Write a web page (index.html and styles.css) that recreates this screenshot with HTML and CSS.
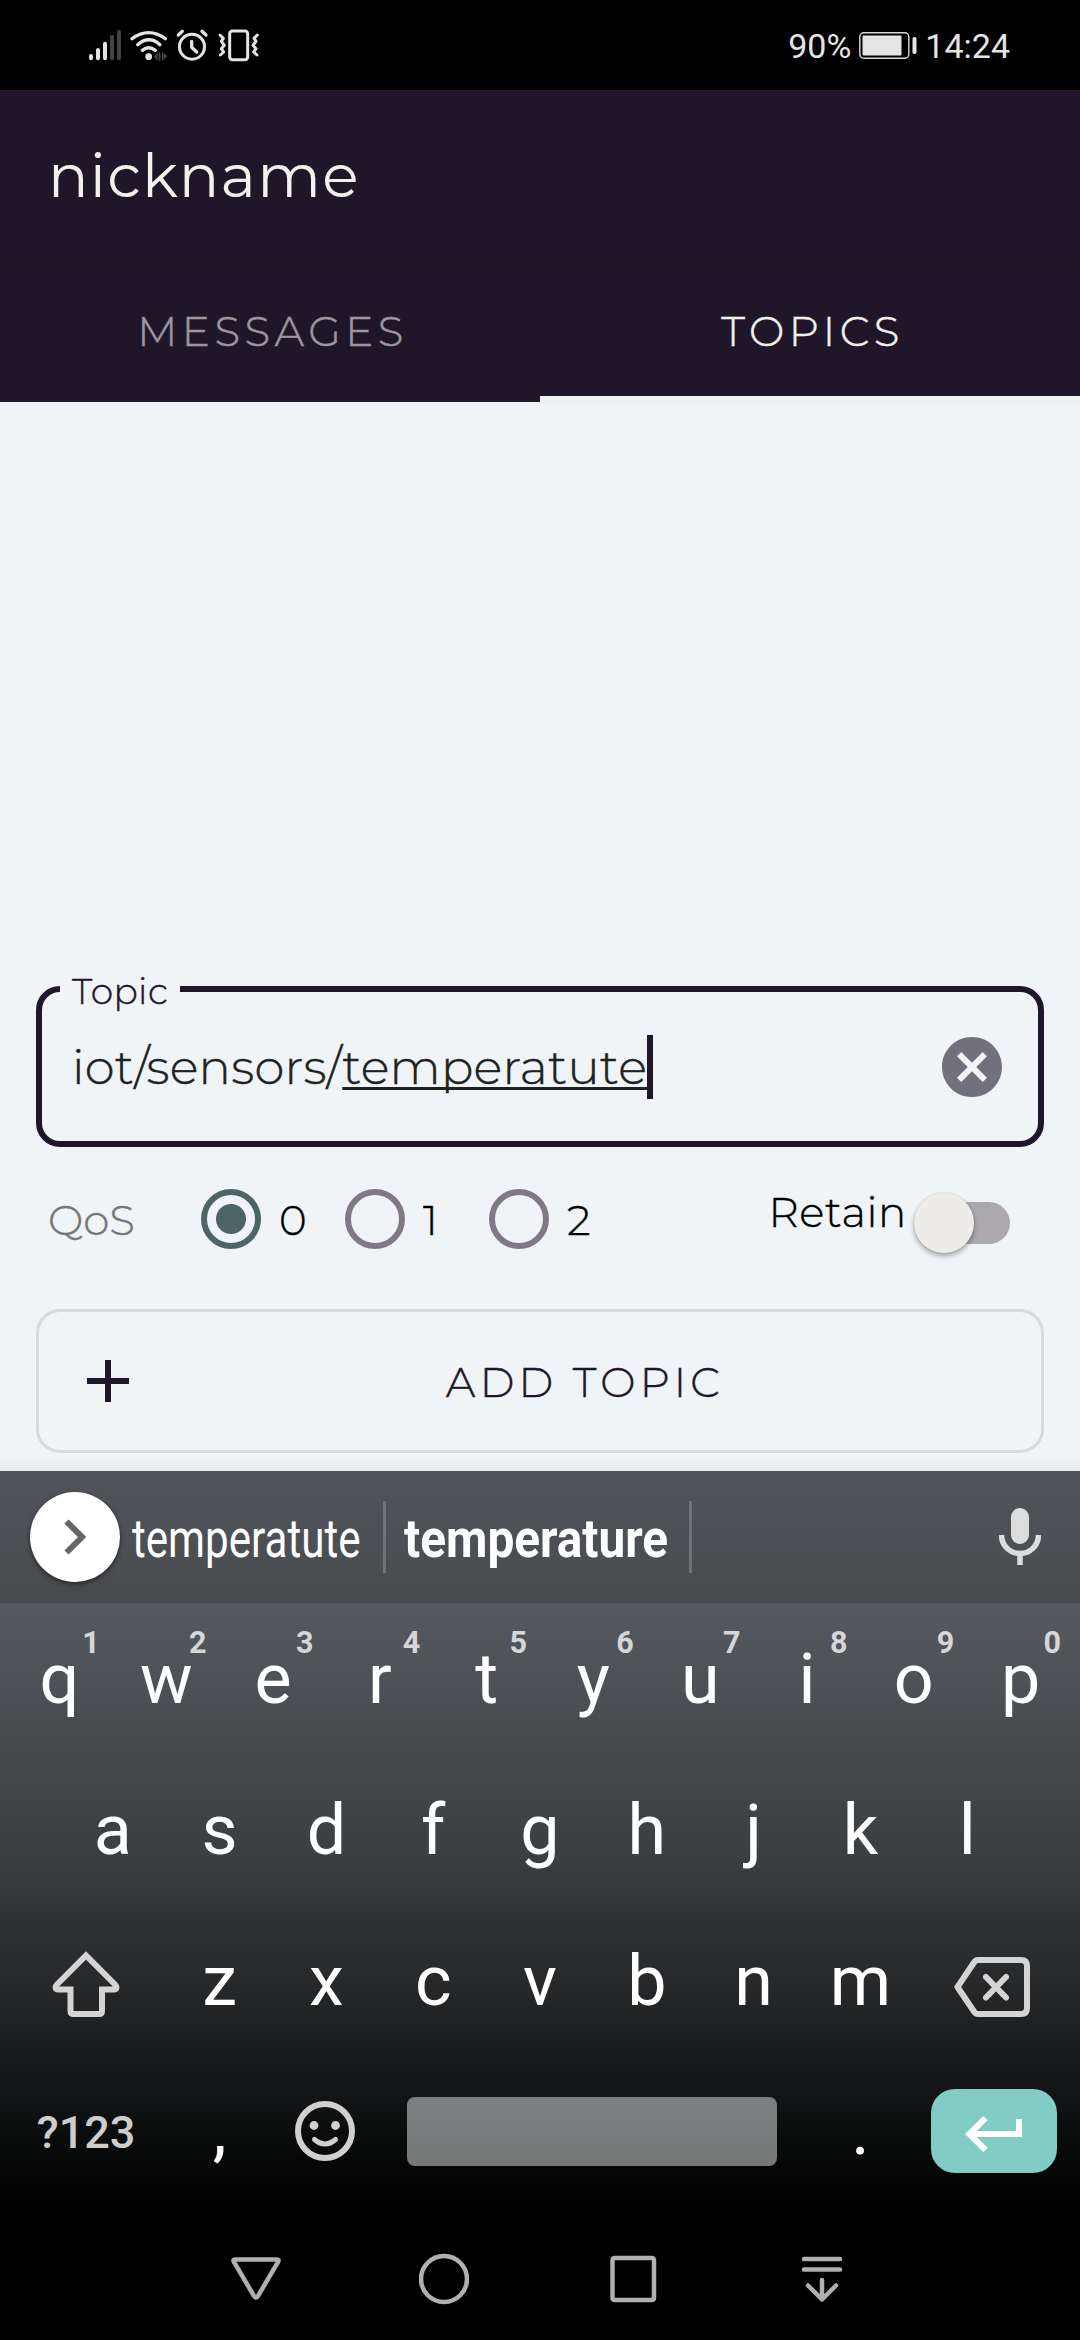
FILE: index.html
```html
<!DOCTYPE html>
<html lang="en">
<head>
<meta charset="utf-8">
<title>nickname</title>
<link rel="stylesheet" href="styles.css">
</head>
<body>
<div class="screen">
  <div class="status-bar">
    <svg class="status-icons" width="190" height="50" viewBox="0 0 570 150" fill="none" stroke="#e4e4e4" stroke-width="10" stroke-linecap="round" stroke-linejoin="round">
      <g stroke-width="12"><path d="M33 108v7M54 90v25M75 71v44"/><path stroke="#444" d="M96 51v64M117 36v79"/></g>
      <path d="M156 56Q206 20 256 56M173 74Q207 45 240 74M187 91Q206 76 226 91"/>
      <circle cx="206" cy="110" r="10" fill="#e4e4e4" stroke="none"/>
      <path fill="#444" stroke="none" d="M222 109l11-11v24zM236 98h5v24h-5zM246 98h4v24h-4zM251 99l11 9-11 12z"/>
      <circle cx="336" cy="80" r="37.5" stroke-width="9"/>
      <path d="M335 64v18l15 14M295 45l12-11M366 34l12 11"/>
      <rect x="449" y="33" width="54" height="86" rx="8" stroke-width="9"/>
      <path stroke-width="9" d="M420 45l10 10-6 9 9 12-9 10 7 10-10 9M532 45l-10 10 6 9-9 12 9 10-7 10 10 9"/>
    </svg>
    <span class="status-battery">90%</span>
    <svg class="battery" width="60" height="30" viewBox="0 0 60 30">
      <rect x="1.8" y="2.8" width="49" height="25.5" rx="4" fill="none" stroke="#d8d8d8" stroke-width="1.4"/>
      <rect x="4.5" y="5.5" width="39" height="20" rx="1" fill="#e4e4e4"/>
      <rect x="54.5" y="7" width="4" height="17" rx="1.8" fill="#e4e4e4"/>
    </svg>
    <span class="status-time">14:24</span>
  </div>

  <header class="app-bar">nickname</header>
  <nav class="tabs">
    <div class="tab">MESSAGES</div>
    <div class="tab tab-active">TOPICS</div>
  </nav>

  <main class="content">
    <div class="field">
      <span class="field-label">Topic</span>
      <span class="field-text">iot/sensors/</span><span class="field-text composing">temperatute</span><span class="caret"></span>
      <svg class="clear" width="72" height="72" viewBox="0 0 24 24" fill="#73707d"><path d="M12 2C6.47 2 2 6.47 2 12s4.47 10 10 10 10-4.47 10-10S17.53 2 12 2zm5 13.59L15.59 17 12 13.41 8.41 17 7 15.59 10.59 12 7 8.41 8.41 7 12 10.59 15.59 7 17 8.41 13.41 12 17 15.59z"/></svg>
    </div>
    <div class="options">
      <span class="qos">QoS</span>
      <div class="radio-option"><span class="radio radio-on"></span>0</div>
      <div class="radio-option"><span class="radio"></span>1</div>
      <div class="radio-option"><span class="radio"></span>2</div>
      <span class="retain">Retain</span>
      <span class="switch"><span class="track"></span><span class="thumb"></span></span>
    </div>
    <div class="add-button">
      <svg width="42" height="42" viewBox="0 0 42 42"><path d="M18 0h6v18h18v6H24v18h-6V24H0v-6h18z" fill="#1f162a"/></svg>
      <span class="add-text">ADD TOPIC</span>
    </div>
  </main>

  <section class="suggestions">
    <span class="expand"><svg width="22" height="36" viewBox="0 0 22 36"><path d="M2.500 2.500L18 18 2.500 33.500" fill="none" stroke="#666" stroke-width="6"/></svg></span>
    <div class="suggestion first"><span class="word">temperatute</span></div>
    <div class="suggestion second"><span class="word word-bold">temperature</span></div>
    <svg class="mic" width="42" height="58" viewBox="0 0 42 58"><rect x="12" y="0" width="18" height="36" rx="9" fill="#dcdcdc"/><path d="M2.500 27a18.500 18.500 0 0 0 37 0M21 46v11" fill="none" stroke="#dcdcdc" stroke-width="5.500"/></svg>
  </section>

  <section class="keyboard">
    <div class="row">
      <div class="key">q<span class="hint">1</span></div><div class="key">w<span class="hint">2</span></div><div class="key">e<span class="hint">3</span></div><div class="key">r<span class="hint">4</span></div><div class="key">t<span class="hint">5</span></div><div class="key">y<span class="hint">6</span></div><div class="key">u<span class="hint">7</span></div><div class="key">i<span class="hint">8</span></div><div class="key">o<span class="hint">9</span></div><div class="key">p<span class="hint">0</span></div>
    </div>
    <div class="row">
      <div class="key">a</div><div class="key">s</div><div class="key">d</div><div class="key">f</div><div class="key">g</div><div class="key">h</div><div class="key">j</div><div class="key">k</div><div class="key">l</div>
    </div>
    <div class="row">
      <div class="key key-wide"><svg class="key-icon" width="68" height="66" viewBox="0 0 68 66" fill="none" stroke="#d4d4d4" stroke-width="6"><path d="M5 33.500L34 4.500 63 33.500C65.500 36 64.500 38.500 62 38.500H50V60Q50 63 47 63H21.500Q18.500 63 18.500 60V38.500H6C3.500 38.500 2.500 36 5 33.500Z"/></svg></div>
      <div class="key">z</div><div class="key">x</div><div class="key">c</div><div class="key">v</div><div class="key">b</div><div class="key">n</div><div class="key">m</div>
      <div class="key key-wide"><svg class="key-icon key-backspace" width="76" height="60" viewBox="0 0 76 60" fill="none" stroke="#d4d4d4" stroke-width="6" stroke-linejoin="round"><path d="M24 3H67Q73 3 73 9V51Q73 57 67 57H24Q21.500 57 20 54.500L3.500 30 20 5.500Q21.500 3 24 3Z"/><path stroke-linecap="round" d="M32 20l20 20.500M52 20L32 40.500"/></svg></div>
    </div>
    <div class="row row-bottom">
      <div class="key key-wide key-symbols">?123</div>
      <div class="key">,</div>
      <div class="key"><svg class="emoji" width="60" height="60" viewBox="0 0 60 60" fill="none" stroke="#d0d0d0"><circle cx="30" cy="30" r="27" stroke-width="6"/><g fill="#d0d0d0" stroke="none"><circle cx="19" cy="24.500" r="4.400"/><circle cx="40.500" cy="24.500" r="4.400"/></g><path d="M19.500 38.500Q30 47.500 40.500 38.500" stroke-width="5" stroke-linecap="round"/></svg></div>
      <div class="key key-space"><span class="space"></span></div>
      <div class="key">.</div>
      <div class="key key-wide"><span class="enter"><svg width="58" height="36" viewBox="0 0 58 36" fill="none" stroke="#fff" stroke-width="6"><path d="M54 3V18H4M20.500 2L4.300 18 20.500 34"/></svg></span></div>
    </div>
    <div class="nav-bar">
      <svg width="50" height="52" viewBox="0 0 50 52"><path d="M4 6.500H46Q48.500 6.500 47 9L27 43Q25 46 23 43L3 9Q1.500 6.500 4 6.500Z"/></svg>
      <svg width="50" height="52" viewBox="0 0 50 52"><circle cx="25" cy="26" r="23"/></svg>
      <svg width="50" height="52" viewBox="0 0 50 52"><rect x="4.500" y="5" width="41.500" height="42" rx="2"/></svg>
      <svg width="50" height="52" viewBox="0 0 50 52" stroke-linecap="round" stroke-linejoin="round"><path d="M8 6H44M8 16.500H44M26 27V46.500M12 32.500L26 46.500 40 32.500"/></svg>
    </div>
  </section>
</div>
</body>
</html>
```
FILE: styles.css
```css
* { box-sizing: border-box; }
body { margin: 0; background: #000; }

.screen {
  width: 1080px;
  height: 2340px;
  display: flex;
  flex-direction: column;
  overflow: hidden;
  background: #f0f4f6;
  font-family: "Montserrat", "Inter", sans-serif;
  font-weight: 300;
}
svg { display: block; flex: none; }

/* system status bar */
.status-bar {
  height: 90px;
  padding: 0 70px 0 80px;
  display: flex;
  align-items: center;
  background: #000;
  color: #e4e4e4;
  font: 400 34px/44px "Roboto", sans-serif;
}
.status-icons { margin-right: auto; }
.status-battery { margin-right: 7px; padding-top: 1px; }
.battery { margin-right: 7px; }
.status-time { padding-top: 1px; }

/* app header */
.app-bar {
  height: 168px;
  padding: 3px 48px 0;
  display: flex;
  align-items: center;
  background: #1f162a;
  color: #f1f1ee;
  font-size: 60px;
  font-weight: 400;
  letter-spacing: 1.3px;
}
.tabs {
  height: 144px;
  display: flex;
  background: linear-gradient(#1b1623, #1f162a 8px);
  -webkit-text-stroke-width: 0.5px;
}
.tab {
  flex: 1;
  display: flex;
  align-items: center;
  justify-content: center;
  padding: 1px 0 0 5px;
  color: #9b97a0;
  font-size: 42px;
  letter-spacing: 4.5px;
}
.tab-active { color: #f1f1ee; padding-top: 7px; border-bottom: 6px solid #f1f1ee; }

/* topic form */
.content {
  flex: none;
  height: 1069px;
  padding: 584px 36px 0;
  background: linear-gradient(#f0f4f6 1058px, #e6ebec 1069px);
  -webkit-text-stroke-width: 0.4px;
}
.field {
  position: relative;
  height: 161px;
  padding: 0 30px;
  display: flex;
  align-items: center;
  border: 6px solid #1f162a;
  border-radius: 24px;
}
.field-label {
  position: absolute;
  left: 18px;
  top: -23px;
  padding: 0 12px;
  background: #f0f4f6;
  color: #1f162a;
  font-size: 36px;
  line-height: 44px;
  letter-spacing: 0.4px;
}
.field-text { padding-top: 1px; font-size: 48px; line-height: 66px; letter-spacing: 0.26px; color: #202221; }
.composing { text-decoration: underline 3px #202221; text-underline-offset: 3px; text-decoration-skip-ink: none; }
.caret { width: 6px; height: 64px; background: #1f162a; }
.clear { margin-left: auto; }

.options {
  height: 60px;
  margin-top: 42px;
  padding: 0 34px 0 12px;
  display: flex;
  align-items: center;
  font-size: 42px;
  line-height: 60px;
  color: #000;
}
.qos { width: 153px; color: #757776; padding-top: 2px; }
.radio-option { width: 144px; display: flex; align-items: center; gap: 18px; padding-top: 2px; }
.radio { width: 60px; height: 60px; margin-top: -2px; border: 6px solid #807985; border-radius: 50%; }
.radio-on { border-color: #4d6564; background: radial-gradient(circle, #4d6564 14.500px, transparent 15.500px); }
.retain { margin-left: auto; padding-bottom: 14px; letter-spacing: 0.6px; }
.switch { width: 96px; height: 62px; margin-left: 7px; margin-top: 8px; display: grid; align-items: center; }
.track { grid-area: 1 / 1; width: 78px; height: 42px; margin-left: 18px; border-radius: 21px; background: #aca9ac; }
.thumb { grid-area: 1 / 1; width: 60px; height: 60px; border-radius: 50%; background: #edece9; box-shadow: 0 3px 5px rgba(0, 0, 0, 0.32), 0 0 2px rgba(0, 0, 0, 0.14); }

.add-button {
  height: 144px;
  margin-top: 60px;
  padding: 0 0 0 48px;
  display: flex;
  align-items: center;
  border: 3px solid #d7d9db;
  border-radius: 24px;
  color: #1f162a;
  font-size: 42px;
  letter-spacing: 4.3px;
}
.add-text { flex: 1; text-align: center; padding-top: 2px; }

/* keyboard suggestion strip */
.suggestions {
  flex: none;
  height: 132px;
  padding: 0 39px 0 30px;
  display: flex;
  align-items: center;
  background: linear-gradient(#505458, #4c4f53 60%, #48494c);
  color: #fff;
  font: 400 54px/64px "Roboto", sans-serif;
}
.expand {
  flex: none;
  width: 90px;
  height: 90px;
  display: grid;
  place-items: center;
  border-radius: 50%;
  background: #fff;
  box-shadow: 0 2px 5px rgba(0, 0, 0, 0.5);
}
.suggestion {
  flex: none;
  height: 72px;
  border-right: 3px solid #707376;
  padding-top: 6px;
}
.first { width: 266px; padding-left: 12px; }
.second { width: 306px; padding-left: 18px; }
.word { display: inline-block; transform: scaleX(0.78); transform-origin: 0 50%; }
.word-bold { font-weight: 700; transform: scaleX(0.885); }
.mic { margin-left: auto; }

/* keys */
.keyboard {
  flex: none;
  height: 737px;
  background: linear-gradient(#55585c 0, #4e5156 77px, #484b4e 127px, #404446 197px, #3b3f41 252px, #2e3235 317px, #27292b 377px, #202123 417px, #171819 467px, #0f1112 507px, #080a09 547px, #020302 587px, #000 617px);
}
.row {
  height: 151px;
  display: flex;
  justify-content: center;
}
.row-bottom { height: 148px; }
.key {
  position: relative;
  width: 106.800px;
  display: flex;
  align-items: center;
  justify-content: center;
  color: #fff;
  font: 400 70px/80px "Roboto", sans-serif;
}
.key-wide { width: 160.200px; }
.key-space { width: 427.200px; }
.key-icon { margin-top: 6px; }
.key-backspace { margin: 13px 3px 0 0; }
.key-symbols { padding-top: 5px; color: #cdcdcd; font-size: 45px; font-weight: 500; }
.emoji { margin: 2px 3px 0 0; }
.hint {
  position: absolute;
  right: 13px;
  top: 20px;
  color: #d5d6d7;
  font-size: 30.500px;
  font-weight: 700;
  line-height: 40px;
}
.space { width: 370px; height: 69px; margin: 3px 3px 0 0; border-radius: 8px; background: linear-gradient(#7e7f81, #757676); }
.enter { width: 126px; height: 84px; margin-top: 2px; display: grid; place-items: center; border-radius: 24px; background: #82ccc5; }
.enter svg { margin-top: 5px; }

/* system navigation */
.nav-bar {
  height: 136px;
  padding: 14px 234px 0 231px;
  display: flex;
  align-items: center;
  justify-content: space-between;
  fill: none;
  stroke: #b0b0b0;
  stroke-width: 4.500px;
}
```
